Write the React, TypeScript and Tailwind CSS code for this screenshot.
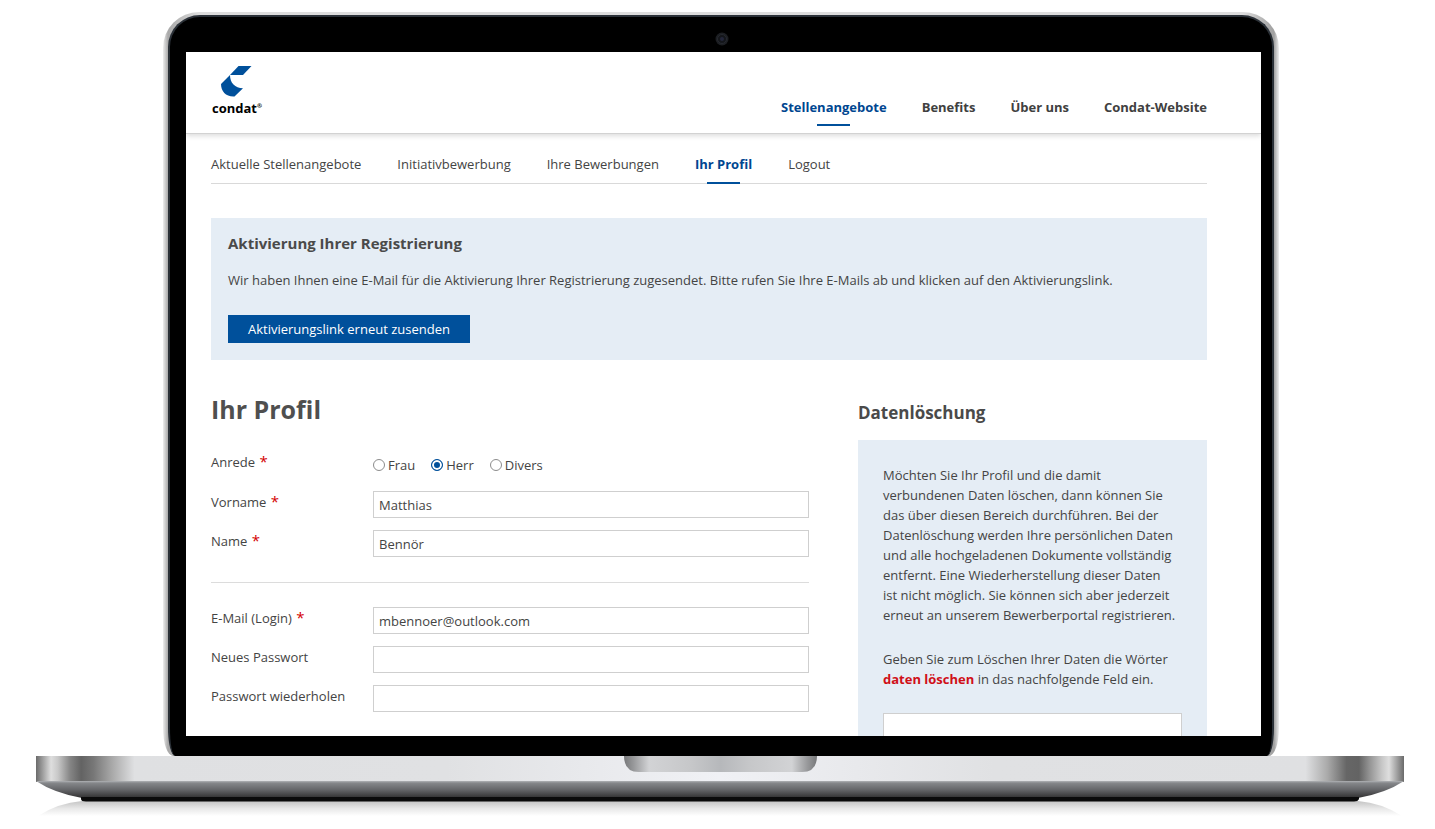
import React from "react";

type NavItem = { label: string; active?: boolean };

const mainNav: NavItem[] = [
  { label: "Stellenangebote", active: true },
  { label: "Benefits" },
  { label: "Über uns" },
  { label: "Condat-Website" },
];

const subNav: NavItem[] = [
  { label: "Aktuelle Stellenangebote" },
  { label: "Initiativbewerbung" },
  { label: "Ihre Bewerbungen" },
  { label: "Ihr Profil", active: true },
  { label: "Logout" },
];

const salutations = ["Frau", "Herr", "Divers"];

function Logo() {
  return (
    <a href="#" className="flex flex-col items-start text-black">
      <svg viewBox="0 0 31 31" className="ml-[9px] h-[31px] w-[31px]" aria-hidden="true">
        <path d="M17.500 0H30.500L22 9H9z" fill="#00509b" />
        <path d="M9 9C9 17 14 22 22 22.200L13.500 30.500C5 31 0 25.500 0 18z" fill="#00509b" />
      </svg>
      <span className="flex pt-px text-[13px] leading-5 font-bold">
        condat<span className="text-[6px] leading-4">®</span>
      </span>
    </a>
  );
}

function Header() {
  return (
    <header className="relative flex h-[82px] shrink-0 items-end justify-between border-b border-[#d2d2d2] pr-[54px] pl-[26px] shadow-[0_2px_5px_rgba(0,0,0,0.14)]">
      <div className="self-start pt-[14px]">
        <Logo />
      </div>
      <nav className="flex gap-[35px] pb-[7px] font-bold">
        {mainNav.map((item) => (
          <a
            key={item.label}
            href="#"
            className={`flex flex-col items-center gap-[7px] ${item.active ? "text-[#004690]" : "text-[#404040]"}`}
          >
            {item.label}
            <span className={`h-0.5 w-[33px] ${item.active ? "bg-[#00509b]" : ""}`} />
          </a>
        ))}
      </nav>
    </header>
  );
}

function SubNav() {
  return (
    <nav className="flex gap-9 border-b border-[#d9d9d9] pt-5">
      {subNav.map((item) => (
        <a
          key={item.label}
          href="#"
          className={`-mb-px flex flex-col items-center gap-2 ${item.active ? "font-bold text-[#004690]" : ""}`}
        >
          {item.label}
          <span className={`h-0.5 w-[33px] ${item.active ? "bg-[#00509b]" : ""}`} />
        </a>
      ))}
    </nav>
  );
}

function ActivationNotice() {
  return (
    <section className="mt-[34px] bg-[#e5edf5] px-[17px] pt-[15px] pb-[17px]">
      <h2 className="text-[15px] leading-5 font-bold text-[#4a4a4a]">Aktivierung Ihrer Registrierung</h2>
      <p className="mt-[17px]">
        Wir haben Ihnen eine E-Mail für die Aktivierung Ihrer Registrierung zugesendet. Bitte rufen Sie Ihre E-Mails
        ab und klicken auf den Aktivierungslink.
      </p>
      <button type="button" className="mt-[25px] h-7 bg-[#00509b] px-5 text-white">
        Aktivierungslink erneut zusenden
      </button>
    </section>
  );
}

function Required() {
  return <span className="ml-px text-[15px] leading-none text-[#d40000]">*</span>;
}

type FieldProps = { id: string; label: string; value?: string; type?: string; required?: boolean };

function Field({ id, label, value = "", type = "text", required }: FieldProps) {
  return (
    <div className="flex">
      <label htmlFor={id} className="w-[162px] shrink-0 leading-[22px]">
        {label} {required && <Required />}
      </label>
      <input
        id={id}
        type={type}
        defaultValue={value}
        className="h-[27px] min-w-0 flex-1 border border-[#cfcfcf] bg-white px-[5px] outline-none"
      />
    </div>
  );
}

function ProfileForm() {
  return (
    <form>
      <h1 className="text-[25px] leading-[34px] font-bold text-[#4f4f4f]">Ihr Profil</h1>
      <div className="mt-[25px] flex flex-col gap-3">
        <div role="radiogroup" aria-labelledby="anrede" className="flex">
          <span id="anrede" className="w-[162px] shrink-0 leading-[22px]">
            Anrede <Required />
          </span>
          <div className="flex h-7 items-center gap-4">
            {salutations.map((name) => (
              <label key={name} className="flex items-center gap-[3px]">
                <input
                  type="radio"
                  name="anrede"
                  defaultChecked={name === "Herr"}
                  className="size-3 appearance-none rounded-full border border-[#8c8c8c] bg-white checked:border-[#00509b] checked:bg-[#00509b] checked:shadow-[inset_0_0_0_2px_white]"
                />
                {name}
              </label>
            ))}
          </div>
        </div>
        <Field id="vorname" label="Vorname" value="Matthias" required />
        <Field id="name" label="Name" value="Bennör" required />
      </div>
      <hr className="mt-[25px] mb-6 border-[#dcdcdc]" />
      <div className="flex flex-col gap-3">
        <Field id="email" label="E-Mail (Login)" value="mbennoer@outlook.com" type="email" required />
        <Field id="passwort" label="Neues Passwort" type="password" />
        <Field id="passwort2" label="Passwort wiederholen" type="password" />
      </div>
    </form>
  );
}

function DeletionPanel() {
  return (
    <aside>
      <h2 className="mt-[9px] text-[17px] leading-6 font-bold text-[#4a4a4a]">Datenlöschung</h2>
      <div className="mt-[15px] bg-[#e5edf5] p-[25px]">
        <p>
          Möchten Sie Ihr Profil und die damit verbundenen Daten löschen, dann können Sie das über diesen Bereich
          durchführen. Bei der Datenlöschung werden Ihre persönlichen Daten und alle hochgeladenen Dokumente
          vollständig entfernt. Eine Wiederherstellung dieser Daten ist&nbsp;nicht möglich. Sie können sich aber
          jederzeit erneut an unserem Bewerberportal registrieren.
        </p>
        <label htmlFor="loeschen" className="mt-6 block">
          Geben Sie zum Löschen Ihrer Daten die Wörter <strong className="font-bold text-[#d01018]">daten löschen</strong>{" "}
          in das nachfolgende Feld ein.
        </label>
        <input id="loeschen" type="text" className="mt-6 h-[27px] w-full border border-[#cfcfcf] bg-white px-[5px]" />
      </div>
    </aside>
  );
}

function Camera() {
  return (
    <svg viewBox="0 0 14 14" className="size-[14px]" aria-hidden="true">
      <circle cx="7" cy="7" r="6.500" fill="#1c1e22" />
      <circle cx="7" cy="7" r="4.500" fill="#14161a" stroke="#26292f" />
      <circle cx="7" cy="7" r="2" fill="#23263a" />
    </svg>
  );
}

function LaptopBase() {
  return (
    <svg viewBox="0 0 1368 73" preserveAspectRatio="none" className="block h-[73px] w-full" aria-hidden="true">
      <defs>
        <linearGradient id="deck">
          <stop offset="0" stopColor="#6a6a6a" />
          <stop offset="0.003" stopColor="#8a8a8a" />
          <stop offset="0.011" stopColor="#dedede" />
          <stop offset="0.016" stopColor="#c8c8c8" />
          <stop offset="0.025" stopColor="#858585" />
          <stop offset="0.033" stopColor="#636363" />
          <stop offset="0.042" stopColor="#777" />
          <stop offset="0.056" stopColor="#aaa" />
          <stop offset="0.072" stopColor="#dfe0e2" />
          <stop offset="0.3" stopColor="#e0e1e3" />
          <stop offset="0.5" stopColor="#f0f1f5" />
          <stop offset="0.7" stopColor="#e0e1e3" />
          <stop offset="0.928" stopColor="#dfe0e2" />
          <stop offset="0.944" stopColor="#aaa" />
          <stop offset="0.958" stopColor="#666" />
          <stop offset="0.967" stopColor="#636363" />
          <stop offset="0.975" stopColor="#959595" />
          <stop offset="0.984" stopColor="#c8c8c8" />
          <stop offset="0.989" stopColor="#dedede" />
          <stop offset="0.997" stopColor="#8a8a8a" />
          <stop offset="1" stopColor="#6a6a6a" />
        </linearGradient>
        <linearGradient id="under" x2="0" y2="1">
          <stop offset="0" stopColor="#b0b2b5" />
          <stop offset="0.12" stopColor="#85878a" />
          <stop offset="0.5" stopColor="#66676a" />
          <stop offset="1" stopColor="#303030" />
        </linearGradient>
        <linearGradient id="notch">
          <stop offset="0" stopColor="#77787a" />
          <stop offset="0.05" stopColor="#98999b" />
          <stop offset="0.13" stopColor="#d2d3d5" />
          <stop offset="0.35" stopColor="#c6c7c9" />
          <stop offset="0.5" stopColor="#b6b8bb" />
          <stop offset="0.65" stopColor="#c6c7c9" />
          <stop offset="0.87" stopColor="#d2d3d5" />
          <stop offset="0.95" stopColor="#98999b" />
          <stop offset="1" stopColor="#77787a" />
        </linearGradient>
        <linearGradient id="floor" x2="0" y2="1">
          <stop offset="0" stopColor="#c4c4c4" />
          <stop offset="0.5" stopColor="#e8e8e8" />
          <stop offset="1" stopColor="#fff" />
        </linearGradient>
      </defs>
      <path d="M2 60Q22 47 46 45H1322Q1346 47 1366 60z" fill="url(#floor)" />
      <rect width="1368" height="26" fill="url(#deck)" />
      <path d="M0 25H1368Q1350 37 1322 42H46Q18 37 0 25z" fill="url(#under)" />
      <path d="M45 41H1323V43Q1322 45.500 1318 45.500H50Q45 45.500 45 43z" fill="#0b0b0b" />
      <path d="M588 0H781Q781 16 766 16H603Q588 16 588 0z" fill="url(#notch)" />
    </svg>
  );
}

export default function App() {
  return (
    <div className="flex h-screen flex-col overflow-hidden bg-white font-['Open_Sans',sans-serif] text-[13px] leading-5 text-[#444]">
      <div className="flex min-h-0 flex-1 flex-col pt-3 pr-[156px] pl-[163px]">
        <div className="flex min-h-0 flex-1 flex-col rounded-t-[36px] bg-[linear-gradient(to_right,#eeeeee,#a9a9a9_5px,#dddddd_36px,#dddddd_calc(100%-36px),#a0a0a0_calc(100%-5px),#eeeeee)] px-[5px] pt-[3px] [border-bottom-left-radius:10px_28px] [border-bottom-right-radius:10px_28px]">
          <div className="flex min-h-0 flex-1 flex-col rounded-t-[32px] border-2 border-b-0 border-[#2b3138] bg-black pr-[11px] pb-5 pl-4 [border-bottom-left-radius:7px_28px] [border-bottom-right-radius:7px_28px]">
            <div className="flex h-[35px] shrink-0 items-center justify-center pt-2 pr-1">
              <Camera />
            </div>
            <div className="flex min-h-0 flex-1 flex-col overflow-hidden bg-white">
              <Header />
              <main className="pr-[54px] pl-[25px]">
                <SubNav />
                <ActivationNotice />
                <div className="mt-8 grid grid-cols-[598fr_349fr] gap-[49px]">
                  <ProfileForm />
                  <DeletionPanel />
                </div>
              </main>
            </div>
          </div>
        </div>
      </div>
      <div className="shrink-0 pr-[31px] pl-9">
        <LaptopBase />
      </div>
    </div>
  );
}
